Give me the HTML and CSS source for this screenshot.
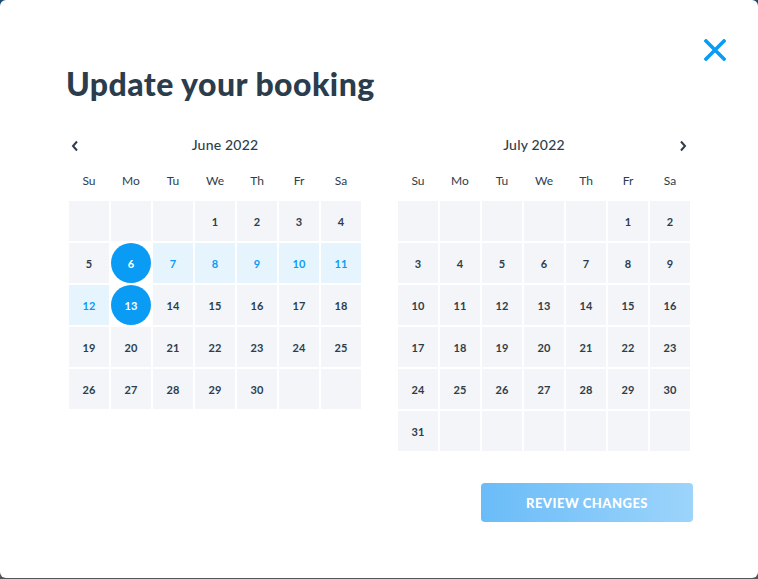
FILE: index.html
```html
<!DOCTYPE html>
<html>
<head>
<meta charset="utf-8">
<link rel="stylesheet" href="styles.css">
</head>
<body>
<div class="modal">
  <button class="close" aria-label="Close">
    <svg width="22" height="22" viewBox="0 0 22 22"><path d="M2 2 L20 20 M20 2 L2 20" stroke="#0a9cf5" stroke-width="3.6" stroke-linecap="square" fill="none"/></svg>
  </button>
  <h1 class="title">Update your booking</h1>
  <div class="months">
    <div class="month">
      <div class="month-head">
        <span class="nav nav-prev"><svg width="8" height="12" viewBox="0 0 8 12"><path d="M6 1.5 L2 6 L6 10.5" stroke="#2e3d4c" stroke-width="2" fill="none"/></svg></span>
        <span class="caption">June 2022</span>
      </div>
      <div class="weekdays"><span>Su</span><span>Mo</span><span>Tu</span><span>We</span><span>Th</span><span>Fr</span><span>Sa</span></div>
      <div class="grid">
        <div class="day"></div><div class="day"></div><div class="day"></div>
        <div class="day">1</div><div class="day">2</div><div class="day">3</div><div class="day">4</div>
        <div class="day">5</div><div class="day sel"><span>6</span></div><div class="day range">7</div><div class="day range">8</div><div class="day range">9</div><div class="day range">10</div><div class="day range">11</div>
        <div class="day range">12</div><div class="day sel"><span>13</span></div><div class="day">14</div><div class="day">15</div><div class="day">16</div><div class="day">17</div><div class="day">18</div>
        <div class="day">19</div><div class="day">20</div><div class="day">21</div><div class="day">22</div><div class="day">23</div><div class="day">24</div><div class="day">25</div>
        <div class="day">26</div><div class="day">27</div><div class="day">28</div><div class="day">29</div><div class="day">30</div><div class="day"></div><div class="day"></div>
      </div>
    </div>
    <div class="month">
      <div class="month-head">
        <span class="caption">July 2022</span>
        <span class="nav nav-next"><svg width="8" height="12" viewBox="0 0 8 12"><path d="M2 1.5 L6 6 L2 10.5" stroke="#2e3d4c" stroke-width="2" fill="none"/></svg></span>
      </div>
      <div class="weekdays"><span>Su</span><span>Mo</span><span>Tu</span><span>We</span><span>Th</span><span>Fr</span><span>Sa</span></div>
      <div class="grid">
        <div class="day"></div><div class="day"></div><div class="day"></div><div class="day"></div><div class="day"></div>
        <div class="day">1</div><div class="day">2</div>
        <div class="day">3</div><div class="day">4</div><div class="day">5</div><div class="day">6</div><div class="day">7</div><div class="day">8</div><div class="day">9</div>
        <div class="day">10</div><div class="day">11</div><div class="day">12</div><div class="day">13</div><div class="day">14</div><div class="day">15</div><div class="day">16</div>
        <div class="day">17</div><div class="day">18</div><div class="day">19</div><div class="day">20</div><div class="day">21</div><div class="day">22</div><div class="day">23</div>
        <div class="day">24</div><div class="day">25</div><div class="day">26</div><div class="day">27</div><div class="day">28</div><div class="day">29</div><div class="day">30</div>
        <div class="day">31</div><div class="day"></div><div class="day"></div><div class="day"></div><div class="day"></div><div class="day"></div><div class="day"></div>
      </div>
    </div>
  </div>
  <div class="footer">
    <button class="review">REVIEW CHANGES</button>
  </div>
</div>
</body>
</html>
```

FILE: styles.css
```css
html, body {
  margin: 0;
  padding: 0;
}
body {
  width: 758px;
  height: 579px;
  background: linear-gradient(#1b4a70, #3a4a5a 50%, #555 100%);
  font-family: Lato, "Open Sans", sans-serif;
  color: #2e3d4c;
  overflow: hidden;
}
.modal {
  position: relative;
  box-sizing: border-box;
  width: 758px;
  height: 578px;
  background: #fff;
  border-radius: 6px;
  padding: 64px 0 0 66px;
}
.close {
  position: absolute;
  top: 39px;
  right: 32px;
  width: 22px;
  height: 22px;
  padding: 0;
  border: 0;
  background: none;
  cursor: pointer;
}
.close svg { display: block; }
.title {
  margin: 0;
  font-size: 32px;
  line-height: 40px;
  font-weight: 900;
  color: #2b3d4d;
  letter-spacing: 0.45px;
}
.months {
  display: flex;
  gap: 37px;
  margin: 30px 0 0 3px;
}
.month { width: 292px; }
.month-head {
  display: flex;
  align-items: center;
  height: 20px;
}
.nav {
  width: 20px;
  height: 20px;
  display: flex;
  align-items: center;
  padding-top: 4px;
  box-sizing: border-box;
}
.nav-prev { justify-content: flex-start; padding-left: 2px; }
.nav-next { justify-content: flex-end; padding-right: 3px; }
.caption {
  flex: 1;
  text-align: center;
  font-size: 14px;
  font-weight: 500;
  letter-spacing: 0.2px;
}
.weekdays {
  display: grid;
  grid-template-columns: repeat(7, 40px);
  column-gap: 2px;
  margin-top: 17px;
  height: 20px;
  line-height: 20px;
  font-size: 12px;
  text-align: center;
}
.grid {
  display: grid;
  grid-template-columns: repeat(7, 40px);
  grid-auto-rows: 40px;
  gap: 2px;
  margin-top: 10px;
}
.day {
  background: #f3f5f8;
  display: flex;
  align-items: center;
  justify-content: center;
  font-size: 11px;
  font-weight: 700;
  color: #2e3d4c;
}
.day.range {
  background: #e6f4fe;
  color: #0a9cf5;
}
.day.sel {
  background: #fff;
}
.day.sel span {
  width: 40px;
  height: 40px;
  border-radius: 50%;
  background: #0a9cf5;
  color: #fff;
  display: flex;
  align-items: center;
  justify-content: center;
}
.footer {
  display: flex;
  justify-content: flex-end;
  margin: 32px 65px 0 0;
}
.review {
  width: 212px;
  height: 39px;
  border: 0;
  border-radius: 4px;
  background: linear-gradient(90deg, #6abcf8, #9cd4fb);
  color: #fff;
  font-family: Lato, "Open Sans", sans-serif;
  font-size: 13px;
  font-weight: 900;
  letter-spacing: 0.5px;
}
```
